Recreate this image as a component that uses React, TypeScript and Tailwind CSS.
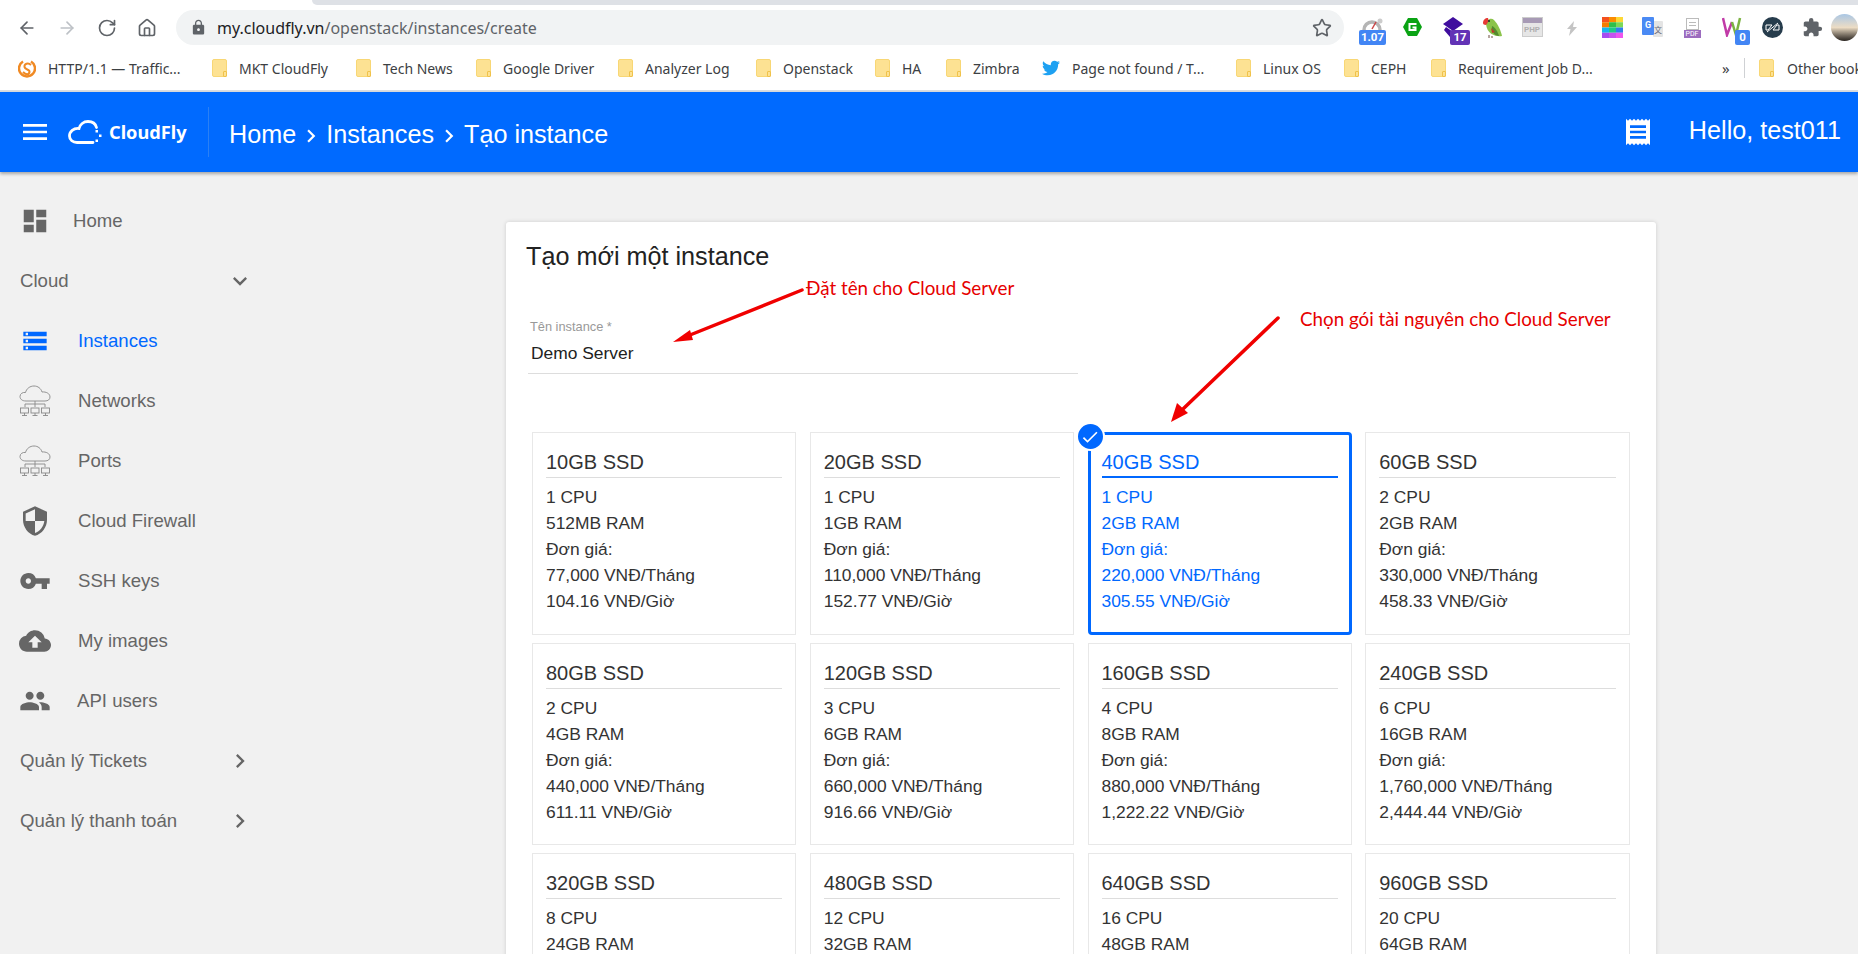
import React from 'react'
import { ArrowLeft, ArrowRight, RotateCw, Home, Star } from 'lucide-react'
import {
  MdChevronRight,
  MdCheck,
  MdCloudUpload,
  MdDashboard,
  MdExpandMore,
  MdExtension,
  MdLock,
  MdMenu,
  MdPeople,
  MdReceipt,
  MdSecurity,
  MdStorage,
  MdVpnKey,
} from 'react-icons/md'
import { FaTwitter } from 'react-icons/fa'

function Folder() {
  return (
    <span className="relative block w-[15px] h-[18px] shrink-0 rounded-[2px] bg-[#fde293] border border-[#f8d775]">
      <span className="absolute right-[-1px] bottom-[-1px] w-[4px] h-[6px] rounded-[1px] border border-[#f0c24b]" />
    </span>
  )
}

const bookmarks = [
  { label: 'MKT CloudFly', w: 'w-[144px]' },
  { label: 'Tech News', w: 'w-[120px]' },
  { label: 'Google Driver', w: 'w-[142px]' },
  { label: 'Analyzer Log', w: 'w-[138px]' },
  { label: 'Openstack', w: 'w-[119px]' },
  { label: 'HA', w: 'w-[71px]' },
  { label: 'Zimbra', w: 'w-[96px]' },
]

const bookmarksRight = [
  { label: 'Linux OS', w: 'w-[108px]' },
  { label: 'CEPH', w: 'w-[87px]' },
  { label: 'Requirement Job D...', w: 'w-[250px]' },
]

function Bookmark({ label, w }: { label: string; w: string }) {
  return (
    <div className={`${w} shrink-0 flex items-center gap-[12px]`}>
      <Folder />
      <span className="whitespace-nowrap">{label}</span>
    </div>
  )
}

function Badge({ text, className }: { text: string; className: string }) {
  return (
    <span className={`absolute top-[25px] flex items-center justify-center h-[15px] rounded-[2px] text-white text-[11.5px] font-bold font-['Roboto',sans-serif] ${className}`}>
      {text}
    </span>
  )
}

function Extensions() {
  return (
    <div className="flex self-start pl-[8px] shrink-0">
      <div className="relative w-10 h-[45px] flex justify-center items-start">
        <svg width="22" height="14" viewBox="0 0 22 14" className="mt-[12px]">
          <path d="M3 13a8 8 0 0 1 16 0" fill="none" stroke="#b5b5b5" strokeWidth="3.500" />
          <path d="M11 12L15 5" stroke="#c44" strokeWidth="1.500" />
          <circle cx="19" cy="4" r="2.500" fill="#ccc" />
        </svg>
        <Badge text="1.07" className="left-[7px] w-[27px] bg-[#4285f4]" />
      </div>
      <div className="w-10 h-[45px] flex justify-center items-start">
        <svg width="19" height="18" viewBox="0 0 19 18" className="mt-[13px]">
          <path d="M5 0h9l5 9-5 9H5L0 9z" fill="#0aa314" />
          <path d="M13.500 6H6.500v6h6V9.500H9.500" fill="none" stroke="#fff" strokeWidth="2" />
        </svg>
      </div>
      <div className="relative w-10 h-[45px]">
        <svg width="22" height="20" viewBox="0 0 22 20" className="absolute left-[11px] top-[12px]">
          <path d="M10 0l10 7-10 7L0 7z" fill="#3f0d9e" />
          <path d="M3 10l7 5 3 0 0 5H7L1 13z" fill="#3f0d9e" />
        </svg>
        <Badge text="17" className="left-[18px] w-[20px] bg-[#6233b5]" />
      </div>
      <div className="w-10 h-[45px] flex justify-center items-start">
        <svg width="19" height="21" viewBox="0 0 19 21" className="mt-[12px]">
          <path d="M3 7c0-4 5-7 8-4 4 4 7 11 8 16-5 1-15-1-16-12z" fill="#8bc34a" />
          <path d="M9 9c3 1 6 6 7 10-4 0-8-4-7-10z" fill="#558b2f" />
          <path d="M8 11l4 4-3 1z" fill="#c0392b" />
          <path d="M0 6c0-3 2-5 5-5 1 2 0 5-2 7C1 8 0 7 0 6z" fill="#e53935" />
          <circle cx="6" cy="4" r="1" fill="#222" />
          <path d="M6 18v3M9 19v2" stroke="#6d4c41" strokeWidth="1" />
        </svg>
      </div>
      <div className="w-10 h-[45px] flex justify-center items-start">
        <div className="w-[21px] h-[20px] mt-[12px] border border-[#ccc] bg-[#e6e6e6] text-[#b0b0b0] text-[8px] font-bold flex flex-col">
          <span className="h-[5px] bg-[#a79ab5] shrink-0" />
          <span className="flex-1 flex items-center justify-center font-['Roboto',sans-serif]">PHP</span>
        </div>
      </div>
      <div className="w-10 h-[45px] flex justify-center items-start">
        <svg width="10" height="15" viewBox="0 0 10 15" className="mt-[16px]">
          <path d="M7 0L0 8h3.500L2 15l8-9H6z" fill="#c4c4c4" />
        </svg>
      </div>
      <div className="w-10 h-[45px] flex justify-center items-start">
        <svg width="21" height="21" viewBox="0 0 3 4" preserveAspectRatio="none" className="mt-[12px]">
          <rect x="0" y="0" width="1" height="1" fill="#f4511e" />
          <rect x="1" y="0" width="1" height="1" fill="#fb8c00" />
          <rect x="2" y="0" width="1" height="1" fill="#fdd835" />
          <rect x="0" y="1" width="1" height="1" fill="#f57c00" />
          <rect x="1" y="1" width="1" height="1" fill="#2fbf4a" />
          <rect x="2" y="1" width="1" height="1" fill="#7cd957" />
          <rect x="0" y="2" width="1" height="1" fill="#16b5ee" />
          <rect x="1" y="2" width="1" height="1" fill="#1fc98a" />
          <rect x="2" y="2" width="1" height="1" fill="#2f7fee" />
          <rect x="0" y="3" width="1" height="1" fill="#a64df0" />
          <rect x="1" y="3" width="1" height="1" fill="#c653f0" />
          <rect x="2" y="3" width="1" height="1" fill="#ee55ee" />
        </svg>
      </div>
      <div className="relative w-10 h-[45px]">
        <span className="absolute left-[21px] top-[16px] w-[10px] h-[16px] bg-[#e4e4e4] rounded-[1px] text-[8px] text-[#667] text-center leading-[17px] font-['Noto_Sans_CJK_SC',sans-serif]">文</span>
        <span className="absolute left-[10px] top-[12px] w-[12px] h-[18px] bg-[#4a8af4] rounded-[1px] text-[9px] text-white font-bold text-center leading-[16px] font-['Roboto',sans-serif]">G</span>
      </div>
      <div className="w-10 h-[45px] flex justify-center items-start">
        <div className="flex flex-col items-center mt-[13px]">
          <span className="flex flex-col gap-[2px] pt-[3px] px-[2px] w-[13px] h-[12px] border border-[#bbb] bg-white">
            <span className="h-px bg-[#bbb]" />
            <span className="h-px bg-[#bbb]" />
          </span>
          <span className="w-[17px] h-[8px] bg-[#9c6cbf] text-white text-[7px] leading-[8px] text-center font-['Roboto',sans-serif]">PDF</span>
        </div>
      </div>
      <div className="relative w-10 h-[45px] flex justify-center items-start">
        <svg width="20" height="20" viewBox="0 0 20 20" className="mt-[12px]">
          <path d="M1 1l4 17 5-13" fill="none" stroke="#c13aa7" strokeWidth="2.500" />
          <path d="M10 5l4 13 4-17" fill="none" stroke="#7cb342" strokeWidth="2.500" />
        </svg>
        <Badge text="0" className="left-[23px] w-[15px] bg-[#4285f4]" />
      </div>
      <div className="w-10 h-[45px] flex justify-center items-start">
        <svg width="21" height="21" viewBox="0 0 21 21" className="mt-[12px]">
          <circle cx="10.500" cy="10.500" r="10.500" fill="#263c4c" />
          <path d="M4 8h6L6 13H4zM17 13h-6l4-5h2zM5 15L16 6" fill="none" stroke="#fff" strokeWidth="1" />
        </svg>
      </div>
      <div className="w-10 h-[45px] flex justify-center items-start">
        <MdExtension className="w-[21px] h-[21px] text-[#5f6368] mt-[12px]" />
      </div>
      <div className="w-[27px] h-[27px] ml-[-1px] mt-[9px] rounded-full shrink-0 bg-gradient-to-b from-[#a9c6e4] via-[#ecdcc4] to-[#2a2520]" />
    </div>
  )
}

function BrowserChrome() {
  return (
    <div className="bg-white font-['Noto_Sans',sans-serif]">
      <div className="h-[5px] flex">
        <div className="w-[312px] bg-white" />
        <div className="flex-1 bg-[#dee1e6] rounded-bl-[5px]" />
      </div>
      <div className="h-[45px] flex items-center overflow-hidden">
        <div className="flex items-center w-[176px] shrink-0 pl-[17px] gap-[20px] text-[#5f6368]">
          <ArrowLeft className="w-5 h-5" strokeWidth={2} />
          <ArrowRight className="w-5 h-5 text-[#bdc1c6]" strokeWidth={2} />
          <RotateCw className="w-5 h-5" strokeWidth={2} />
          <Home className="w-5 h-5" strokeWidth={2} />
        </div>
        <div className="w-[1168px] h-[35px] shrink-0 rounded-full bg-[#f1f3f4] flex items-center pl-[14px] pr-[12px]">
          <MdLock className="w-[17px] h-[17px] text-[#5f6368] shrink-0" />
          <span className="ml-[10px] text-[16px] text-[#202124] whitespace-nowrap">
            my.cloudfly.vn<span className="text-[#5f6368]">/openstack/instances/create</span>
          </span>
          <Star className="ml-auto w-[20px] h-[20px] text-[#5f6368]" strokeWidth={2} />
        </div>
        <Extensions />
      </div>
      <div className="h-[40px] flex items-center pl-[18px] pb-[4px] text-[14px] text-[#3c4043] overflow-hidden">
        <div className="w-[194px] shrink-0 flex items-center gap-[12px]">
          <svg width="18" height="19" viewBox="0 0 18 19" className="shrink-0">
            <path d="M5 2.500a8 8 0 1 0 8 0" fill="none" stroke="#f08a24" strokeWidth="2.500" />
            <path d="M13 6C10 3 6 5 6.500 8S12 10 11.500 13 8 16 5 13" fill="none" stroke="#f08a24" strokeWidth="2" />
          </svg>
          <span className="whitespace-nowrap">HTTP/1.1 — Traffic...</span>
        </div>
        {bookmarks.map((b) => (
          <Bookmark key={b.label} label={b.label} w={b.w} />
        ))}
        <div className="w-[194px] shrink-0 flex items-center gap-[12px]">
          <FaTwitter className="w-[18px] h-[18px] text-[#1da1f2] shrink-0" />
          <span className="whitespace-nowrap">Page not found / T...</span>
        </div>
        {bookmarksRight.map((b) => (
          <Bookmark key={b.label} label={b.label} w={b.w} />
        ))}
        <span className="w-[22px] shrink-0 ml-[41px] text-[15px]">»</span>
        <div className="w-px h-[20px] bg-[#cfd1d4] shrink-0" />
        <div className="ml-[14px] shrink-0 flex items-center gap-[13px]">
          <Folder />
          <span className="whitespace-nowrap">Other bookmarks</span>
        </div>
      </div>
      <div className="h-[2px] bg-[#dadce0]" />
    </div>
  )
}

function CloudLogo() {
  return (
    <svg width="34" height="24" viewBox="0 0 34 24" className="shrink-0">
      <path
        d="M28.500 7.500C27.500 3.500 24 1.500 20 1.500C15.500 1.500 12 4.500 11 8.500C5.500 8 1.500 11.500 1.500 16C1.500 20 5 22.500 9 22.500H25"
        fill="none"
        stroke="#fff"
        strokeWidth="2.800"
        strokeLinecap="round"
      />
      <rect x="27.500" y="10" width="2.500" height="2.500" fill="#fff" />
      <rect x="31" y="14.500" width="2.500" height="2.500" fill="#fff" />
      <rect x="27.500" y="19.500" width="2.500" height="2.500" fill="#fff" />
    </svg>
  )
}

function AppHeader() {
  return (
    <header className="relative z-10 h-[80px] bg-[#006aff] shadow-[0_2px_3px_rgba(0,0,0,0.3)] flex items-center text-white">
      <MdMenu className="ml-[19px] w-[32px] h-[32px] shrink-0" />
      <div className="ml-[17px] flex items-center gap-[7px] w-[121px] shrink-0">
        <CloudLogo />
        <span className="font-['Noto_Sans',sans-serif] font-bold text-[18.2px] mt-[2px]">CloudFly</span>
      </div>
      <div className="w-px h-[50px] bg-[#2a80f5] ml-[19px] shrink-0" />
      <nav className="ml-[20px] mt-[5px] flex items-center text-[25.2px]">
        <span>Home</span>
        <span className="w-[30px] flex justify-center">
          <MdChevronRight className="w-[26px] h-[26px] mt-[3px]" />
        </span>
        <span>Instances</span>
        <span className="w-[30px] flex justify-center">
          <MdChevronRight className="w-[26px] h-[26px] mt-[3px]" />
        </span>
        <span>Tạo instance</span>
      </nav>
      <MdReceipt className="ml-auto w-[32px] h-[32px]" />
      <span className="ml-[35px] mr-[17px] text-[25.2px] mb-[2px]">Hello, test011</span>
    </header>
  )
}

function NetworkCloud() {
  return (
    <svg width="32" height="32" viewBox="0 0 32 32" className="text-[#888]" fill="none" stroke="currentColor" strokeWidth="0.9">
      <path d="M7 16C3 16 1 14 1 11.500C1 8.500 4 7 6.500 7.500C7.500 3.500 11 1 15 1C19 1 22 3.500 23 7C27 6.500 31 8.500 31 12C31 14.500 29 16 26 16Z" />
      <path d="M16 16v6M6 22v-3h20v3" />
      <rect x="1.500" y="23" width="8" height="5" />
      <rect x="12" y="23" width="8" height="5" />
      <rect x="22.500" y="23" width="8" height="5" />
      <path d="M3 30.500h5M13.500 30.500h5M24 30.500h5M5.500 28v2.500M16 28v2.500M26.500 28v2.500" />
    </svg>
  )
}

type NavItem = {
  label: string
  icon?: React.ReactNode
  text?: string
  active?: boolean
  chevron?: 'down' | 'right'
}

const navItems: NavItem[] = [
  { label: 'Home', icon: <MdDashboard className="w-[30px] h-[30px]" />, text: 'ml-[22px]' },
  { label: 'Cloud', chevron: 'down' },
  { label: 'Instances', icon: <MdStorage className="w-[28px] h-[28px]" />, text: 'ml-[27px]', active: true },
  { label: 'Networks', icon: <NetworkCloud />, text: 'ml-[27px]' },
  { label: 'Ports', icon: <NetworkCloud />, text: 'ml-[27px]' },
  { label: 'Cloud Firewall', icon: <MdSecurity className="w-[32px] h-[32px]" />, text: 'ml-[27px]' },
  { label: 'SSH keys', icon: <MdVpnKey className="w-[32px] h-[32px]" />, text: 'ml-[27px]' },
  { label: 'My images', icon: <MdCloudUpload className="w-[32px] h-[32px]" />, text: 'ml-[27px]' },
  { label: 'API users', icon: <MdPeople className="w-[32px] h-[32px]" />, text: 'ml-[26px]' },
  { label: 'Quản lý Tickets', chevron: 'right' },
  { label: 'Quản lý thanh toán', chevron: 'right' },
]

function Sidebar() {
  return (
    <aside className="w-[260px] shrink-0 pt-[19px] text-[18.6px] text-[#666]">
      {navItems.map((item) => (
        <div key={item.label} className={`h-[60px] flex items-center pr-[6px] ${item.icon ? 'pl-[19px]' : 'pl-[20px]'} ${item.active ? 'text-[#0068ff]' : ''}`}>
          {item.icon && <span className="w-[32px] flex justify-center shrink-0">{item.icon}</span>}
          <span className={`whitespace-nowrap ${item.text ?? ''}`}>{item.label}</span>
          {item.chevron === 'down' && <MdExpandMore className="ml-auto w-[28px] h-[28px]" />}
          {item.chevron === 'right' && <MdChevronRight className="ml-auto w-[28px] h-[28px]" />}
        </div>
      ))}
    </aside>
  )
}

type Plan = { name: string; lines: string[]; selected?: boolean }

function plan(name: string, cpu: string, ram: string, month: string, hour: string): Plan {
  return { name, lines: [cpu, ram, 'Đơn giá:', `${month} VNĐ/Tháng`, `${hour} VNĐ/Giờ`] }
}

const plans: Plan[] = [
  plan('10GB SSD', '1 CPU', '512MB RAM', '77,000', '104.16'),
  plan('20GB SSD', '1 CPU', '1GB RAM', '110,000', '152.77'),
  { ...plan('40GB SSD', '1 CPU', '2GB RAM', '220,000', '305.55'), selected: true },
  plan('60GB SSD', '2 CPU', '2GB RAM', '330,000', '458.33'),
  plan('80GB SSD', '2 CPU', '4GB RAM', '440,000', '611.11'),
  plan('120GB SSD', '3 CPU', '6GB RAM', '660,000', '916.66'),
  plan('160GB SSD', '4 CPU', '8GB RAM', '880,000', '1,222.22'),
  plan('240GB SSD', '6 CPU', '16GB RAM', '1,760,000', '2,444.44'),
  { name: '320GB SSD', lines: ['8 CPU', '24GB RAM'] },
  { name: '480GB SSD', lines: ['12 CPU', '32GB RAM'] },
  { name: '640GB SSD', lines: ['16 CPU', '48GB RAM'] },
  { name: '960GB SSD', lines: ['20 CPU', '64GB RAM'] },
]

function PlanCard({ p }: { p: Plan }) {
  return (
    <div
      className={
        p.selected
          ? 'relative h-[202.5px] rounded-[4px] border-[3px] border-[#0068ff] text-[#0068ff] px-[11px] pt-[12px]'
          : 'h-[202.5px] border border-[#e8e8e8] text-[#333] px-[13px] pt-[14px]'
      }
    >
      {p.selected && (
        <span className="absolute left-[-15px] top-[-13px] w-[29px] h-[29px] rounded-full border-2 border-white bg-[#0068ff] flex items-center justify-center">
          <MdCheck className="w-[20px] h-[20px] text-white" />
        </span>
      )}
      <div className={`h-[31px] text-[20px] leading-[30px] ${p.selected ? 'border-b-2 border-[#0068ff]' : 'border-b border-[#ddd]'}`}>{p.name}</div>
      <div className="mt-[6px] text-[17.4px] leading-[26px]">
        {p.lines.map((l) => (
          <div key={l}>{l}</div>
        ))}
      </div>
    </div>
  )
}

function Annotations() {
  return (
    <>
      <svg className="absolute left-0 top-0 z-20 pointer-events-none" width="1858" height="954" viewBox="0 0 1858 954">
        <path d="M802 290L690 335" stroke="#f00000" strokeWidth="3.500" strokeLinecap="round" />
        <path d="M673 342L690 330L693 340Z" fill="#f00000" />
        <path d="M1278 318L1183 409" stroke="#f00000" strokeWidth="3.500" strokeLinecap="round" />
        <path d="M1171 422L1177 403L1188 413Z" fill="#f00000" />
      </svg>
      <span className="absolute z-20 left-[806px] top-[276px] text-[18.8px] leading-[24px] text-[#e60000] font-['Lato',sans-serif] whitespace-nowrap">Đặt tên cho Cloud Server</span>
      <span className="absolute z-20 left-[1300px] top-[307px] text-[18.8px] leading-[24px] text-[#e60000] font-['Lato',sans-serif] whitespace-nowrap">Chọn gói tài nguyên cho Cloud Server</span>
    </>
  )
}

export default function App() {
  return (
    <div className="relative h-[954px] w-[1858px] overflow-hidden bg-[#f1f1f1] font-['Liberation_Sans',Arial,sans-serif]">
      <BrowserChrome />
      <AppHeader />
      <div className="flex">
        <Sidebar />
        <main className="pl-[246px] pt-[50px]">
          <section className="w-[1150px] rounded-[3px] bg-white shadow-[0_0_4px_rgba(0,0,0,0.15)] px-[20px] pt-[19px] pb-[40px]">
            <h1 className="text-[25.2px] leading-[30px] text-[#222]">Tạo mới một instance</h1>
            <div className="mt-[48px] w-[550px] ml-[2px] border-b border-[#ddd] h-[55px]">
              <div className="pl-[2px] text-[12.8px] leading-[16px] text-[#999]">Tên instance *</div>
              <div className="pl-[3px] mt-[6px] text-[17.4px] leading-[24px] text-[#222]">Demo Server</div>
            </div>
            <div className="mt-[58px] ml-[6px] w-[1097.500px] grid grid-cols-4 gap-x-[13.500px] gap-y-[8px]">
              {plans.map((p) => (
                <PlanCard key={p.name} p={p} />
              ))}
            </div>
          </section>
        </main>
      </div>
      <Annotations />
    </div>
  )
}
